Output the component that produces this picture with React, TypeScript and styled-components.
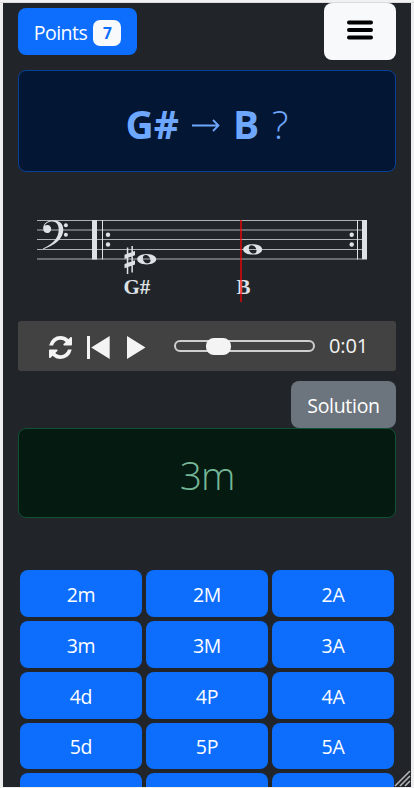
import React from 'react';
import styled, { createGlobalStyle } from 'styled-components';

const Global = createGlobalStyle`
  * { box-sizing: border-box; }
  html, body { margin: 0; background: #eeeeef; overflow: hidden; }
  body { font-family: "Open Sans", "Noto Sans", sans-serif; }
  button { font-family: inherit; }
`;

const Frame = styled.div`
  height: 788px;
  padding: 3px 3px 1px;
  background: linear-gradient(#f1f1f2 0 2px, #dcdcdd 2px 3px, #eeeeef 3px);
`;

const Screen = styled.main`
  position: relative;
  height: 784px;
  padding: 0 15px;
  overflow: hidden;
  background: #212529;
`;

const TopBar = styled.header`
  display: flex;
  justify-content: space-between;
  align-items: flex-start;
  height: 67px;
`;

const Button = styled.button<{ $tone?: string }>`
  display: flex;
  align-items: center;
  justify-content: center;
  height: 47px;
  padding: 3px 0 0;
  border: 0;
  border-radius: 8px;
  color: #fff;
  background: ${(p) => p.$tone ?? '#0d6efd'};
  font-size: 19.5px;
  letter-spacing: -0.3px;
  line-height: 28px;
`;

const PointsButton = styled(Button)`
  width: 119px;
  margin-top: 5px;
  gap: 6px;
  letter-spacing: -0.5px;
`;

const Badge = styled.span`
  width: 28px;
  height: 26px;
  border-radius: 7px;
  background: #f8f9fa;
  color: #0d6efd;
  font-size: 15.5px;
  font-weight: 700;
  line-height: 27px;
  text-align: center;
`;

const MenuButton = styled(Button)`
  width: 72px;
  height: 57px;
  padding: 0 0 4px;
`;

const Panel = styled.section<{ $kind: 'question' | 'answer' }>`
  display: flex;
  align-items: center;
  justify-content: center;
  height: ${(p) => (p.$kind === 'question' ? 102 : 90)}px;
  padding-top: ${(p) => (p.$kind === 'question' ? 5 : 4)}px;
  border: 1px solid ${(p) => (p.$kind === 'question' ? '#084298' : '#0f5132')};
  border-radius: 8px;
  background: ${(p) => (p.$kind === 'question' ? '#031633' : '#051b11')};
  color: ${(p) => (p.$kind === 'question' ? '#6ea8fe' : '#75b798')};
  font-size: 39px;
  font-weight: 300;
  letter-spacing: ${(p) => (p.$kind === 'question' ? 0 : -1)}px;
  line-height: 48px;
`;

const Prompt = styled.div`
  display: flex;
  align-items: center;
  gap: 13px;
  b { font-weight: 700; }
`;

const Score = styled.svg`
  display: block;
  width: 378px;
  height: 149px;
  text {
    fill: #dee2e6;
    font: 700 21px "Liberation Serif", serif;
  }
`;

const Player = styled.section`
  display: flex;
  align-items: center;
  height: 50px;
  border-radius: 3px;
  background: #424242;
  color: #f4f4f4;
`;

const Controls = styled.svg`
  display: block;
  width: 128px;
  height: 50px;
  flex: none;
`;

const Track = styled.div`
  display: flex;
  align-items: center;
  width: 141px;
  height: 12px;
  margin-left: 28px;
  padding-left: 30px;
  border: 2px solid #cfcfcf;
  border-radius: 6px;
`;

const Thumb = styled.span`
  flex: none;
  width: 25px;
  height: 17px;
  border-radius: 8px;
  background: #f4f4f4;
`;

const Time = styled.span`
  margin: -2px 0 0 14px;
  font-size: 20px;
  letter-spacing: -0.1px;
`;

const SolutionRow = styled.div`
  display: flex;
  justify-content: flex-end;
  padding-top: 10px;
`;

const SolutionButton = styled(Button)`
  width: 105px;
`;

const AnswerGrid = styled.section`
  display: grid;
  grid-template-columns: repeat(3, 122px);
  grid-auto-rows: 46.8px;
  gap: 4px;
  margin: 52.2px 2px 0;
`;

const AnswerButton = styled(Button)`
  height: 100%;
`;

const Grip = styled.svg`
  position: absolute;
  right: 0;
  bottom: 0;
  width: 17px;
  height: 17px;
`;

const answers = ['2m', '2M', '2A', '3m', '3M', '3A', '4d', '4P', '4A', '5d', '5P', '5A'];
const emptySlots = [0, 1, 2];
const staffLines = [48.5, 58, 67.5, 77.5, 87];

function WholeNote({ x, y }: { x: number; y: number }) {
  return (
    <path
      transform={`translate(${x} ${y})`}
      fill="#dee2e6"
      fillRule="evenodd"
      d="M-9.5 0C-9.5-3.2-5.2-5.2 0-5.2S9.5-3.2 9.5 0 5.2 5.2 0 5.2-9.5 3.2-9.5 0ZM-3.8-1.6C-4.2 1.2-1.8 4.1 .9 4.1 3 4.1 4 2.8 3.8 .9 3.5-2 1.2-4.1-1.3-4.1-2.8-4.1-3.6-3-3.8-1.6Z"
    />
  );
}

function Notation() {
  return (
    <Score viewBox="0 0 378 149">
      <g stroke="#dee2e6" strokeOpacity=".75">
        {staffLines.map((y) => <path key={y} d={`M19 ${y}H344`} />)}
      </g>
      <g fill="#dee2e6">
        <path d="M25 76.5C35 72 40.7 66 40.7 57.5 40.7 52.5 38 49.6 34.4 49.6 30 49.6 27.2 52 26.8 53.8A4 4 0 1 1 25.2 57.2C24.8 51.8 29 48.2 35.2 48.2 41.5 48.2 45.3 51.8 45.3 57.5 45.3 67.2 36.5 73.2 25.3 77.2Z" />
        <circle cx="47.9" cy="53.3" r="2" />
        <circle cx="47.9" cy="62.7" r="2" />
        <path d="M74 48h5v39.5h-5zM84 48h1v39.5h-1zM339 48h1v39.5h-1zM344 48h5v39.5h-5z" />
        <circle cx="90" cy="62.8" r="2.2" />
        <circle cx="90" cy="72.5" r="2.2" />
        <circle cx="333.7" cy="62.8" r="2.2" />
        <circle cx="333.7" cy="72.5" r="2.2" />
        <path d="M106.5 82.8 117 79v4.2l-10.500 3.8zM106.5 92 117 88.2v4.2l-10.500 3.8zM108.8 75.5h1.5V102h-1.5zM113.4 74h1.5v26.5h-1.5z" />
      </g>
      <WholeNote x={128.7} y={87.2} />
      <WholeNote x={234.7} y={77.4} />
      <text x="105.5" y="122">G#</text>
      <text x="218.5" y="122">B</text>
      <path d="M223 48V130" stroke="#ff0000" strokeOpacity=".65" strokeWidth="2" />
    </Score>
  );
}

function PlayerIcons() {
  return (
    <Controls viewBox="0 0 128 50" fill="#f4f4f4">
      <g transform="translate(31 15) scale(.01497)">
        <path d="M1511 928q0 5-1 7-64 268-268 434.500T764 1536q-146 0-282.500-55T238 1324l-129 129q-19 19-45 19t-45-19-19-45V960q0-26 19-45t45-19h448q26 0 45 19t19 45-19 45l-137 137q71 66 161 102t187 36q134 0 250-65t186-179q11-17 53-117 8-23 30-23h192q13 0 22.500 9.500t9.500 22.500zm25-800v448q0 26-19 45t-45 19h-448q-26 0-45-19t-19-45 19-45l138-138Q969 256 768 256q-134 0-250 65T332 500q-11 17-53 117-8 23-30 23H50q-13 0-22.500-9.500T18 608v-7q65-268 270-434.500T768 0q146 0 284 55.500T1297 212l130-129q19-19 45-19t45 19 19 45z" />
      </g>
      <path d="M69 15h3v23h-3zM91.700 15v23L73.200 26.500zM109 15v23l18.500-11.500z" />
    </Controls>
  );
}

export default function App() {
  return (
    <Frame>
      <Global />
      <Screen>
        <TopBar>
          <PointsButton><span>Points</span><Badge>7</Badge></PointsButton>
          <MenuButton $tone="#f8f9fa" aria-label="Menu">
            <svg width="28" height="22" viewBox="0 0 28 22" stroke="#000" strokeWidth="4" strokeLinecap="round">
              <path d="M3 3.500h22M3 11h22M3 18.500h22" />
            </svg>
          </MenuButton>
        </TopBar>
        <Panel $kind="question">
          <Prompt>
            <b>G#</b>
            <svg width="28" height="16" viewBox="0 0 28 16" fill="none" stroke="#6ea8fe" strokeWidth="1.8">
              <path d="M0 9.500h26.500M21 4l5.500 5.500-5.500 5.500" />
            </svg>
            <b>B</b>
            <span>?</span>
          </Prompt>
        </Panel>
        <Notation />
        <Player>
          <PlayerIcons />
          <Track><Thumb /></Track>
          <Time>0:01</Time>
        </Player>
        <SolutionRow><SolutionButton $tone="#6c757d">Solution</SolutionButton></SolutionRow>
        <Panel $kind="answer">3m</Panel>
        <AnswerGrid>
          {answers.map((label) => <AnswerButton key={label}>{label}</AnswerButton>)}
          {emptySlots.map((slot) => <AnswerButton key={slot} />)}
        </AnswerGrid>
        <Grip viewBox="0 0 17 17" stroke="#b8b8b8" strokeWidth="1.5">
          <path d="M1 16 16 1M6 16 16 6M11 16l5-5" />
        </Grip>
      </Screen>
    </Frame>
  );
}
